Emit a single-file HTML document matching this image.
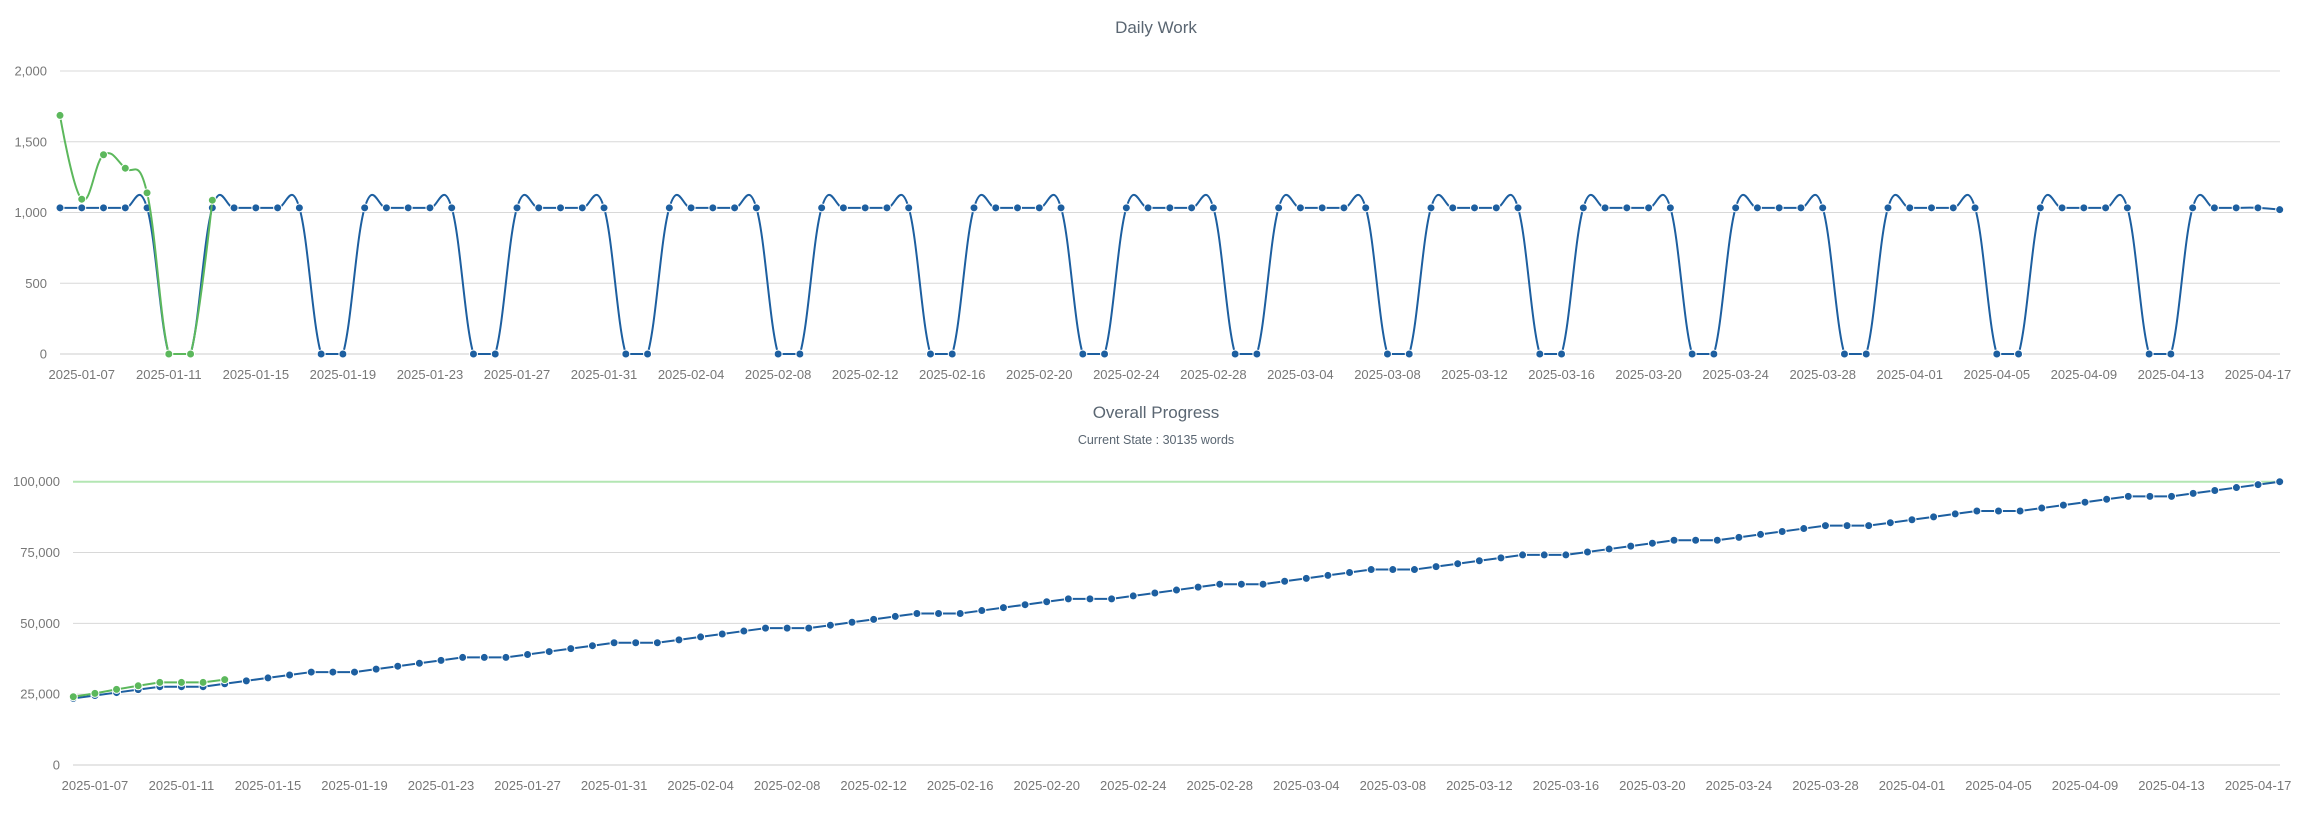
<!DOCTYPE html>
<html><head><meta charset="utf-8"><style>
html,body{margin:0;padding:0;background:#fff;width:2312px;height:820px;overflow:hidden}
svg{display:block}
text{font-family:"Liberation Sans",sans-serif}
</style></head><body>
<svg id="s" width="2312" height="820" xmlns="http://www.w3.org/2000/svg">
<text x="1156" y="33" text-anchor="middle" font-size="17" fill="#5a6672">Daily Work</text>
<text x="1156" y="418" text-anchor="middle" font-size="17" fill="#5a6672">Overall Progress</text>
<text x="1156" y="444" text-anchor="middle" font-size="12.5" fill="#5a6672">Current State : 30135 words</text>
</svg>
<script>
var s=document.getElementById('s'),NS='http://www.w3.org/2000/svg';
function el(t,a,txt){var e=document.createElementNS(NS,t);for(var k in a)e.setAttribute(k,a[k]);if(txt!=null)e.textContent=txt;s.appendChild(e);return e;}
function spline(pts,maxY){
 var d='M'+pts[0][0]+' '+pts[0][1];
 var sm=1.5,den=2.5,ctrl=[];
 for(var i=0;i<pts.length;i++){
  var x=pts[i][0],y=pts[i][1];
  if(i==0||i==pts.length-1){ctrl.push({lx:x,ly:y,rx:x,ry:y});continue;}
  var lx=(sm*x+pts[i-1][0])/den,ly=(sm*y+pts[i-1][1])/den,rx=(sm*x+pts[i+1][0])/den,ry=(sm*y+pts[i+1][1])/den;
  if(rx!==lx){var c=((ry-ly)*(rx-x))/(rx-lx)+y-ry;ly+=c;ry+=c;}
  if(ly>maxY)ly=maxY; if(ry>maxY)ry=maxY;
  ctrl.push({lx:lx,ly:ly,rx:rx,ry:ry});
 }
 for(var i=1;i<pts.length;i++){d+=' C'+ctrl[i-1].rx+' '+ctrl[i-1].ry+' '+ctrl[i].lx+' '+ctrl[i].ly+' '+pts[i][0]+' '+pts[i][1];}
 return d;
}
var N=103,start=new Date(Date.UTC(2025,0,6));
function lab(i){var d=new Date(start.getTime()+i*86400000);return d.toISOString().slice(0,10);}
function isWE(i){var w=new Date(start.getTime()+i*86400000).getUTCDay();return w==0||w==6;}
function chart(o){
 for(var g=0;g<o.ticks.length;g++){var v=o.ticks[g],y=o.Y(v);
  el('line',{x1:o.x0,x2:2280,y1:y,y2:y,stroke:v==0?'#e6e6e6':'#d8d8d8','stroke-width':v==0?2:1});
  el('text',{x:o.lx,y:y+4.5,'text-anchor':'end','font-size':13,fill:'#777'},o.fmt(v));}
 for(var i=1;i<N;i+=4){el('text',{x:o.X(i),y:o.ly,'text-anchor':'middle','font-size':13,fill:'#777'},lab(i));}
 if(o.target!=null){var ty=o.Y(o.target);el('line',{x1:o.x0,x2:2280,y1:ty,y2:ty,stroke:'#b3e6b3','stroke-width':2});}
 var zy=o.Y(0);
 o.series.forEach(function(sr){
  var pts=sr.v.map(function(v,i){return [+o.X(i).toFixed(2),+o.Y(v).toFixed(2)];});
  el('path',{d:sr.smooth?spline(pts,zy):('M'+pts.map(function(p){return p.join(' ')}).join(' L')),fill:'none',stroke:sr.c,'stroke-width':2});
  pts.forEach(function(p){el('circle',{cx:p[0],cy:p[1],r:4,fill:sr.c,stroke:'#fff','stroke-width':1});});
 });
}
function fmt(v){return v.toString().replace(/\B(?=(\d{3})+(?!\d))/g,',');}
var blue='#1d5fa0',green='#5cb85c';
var daily=[];for(var i=0;i<N;i++)daily.push(isWE(i)?0:1033);daily[N-1]=1020;
var gDaily=[1686,1094,1408,1313,1139,0,0,1087];
chart({x0:60,X:function(i){return 60+i*(2279.7-60)/102;},Y:function(v){return 354-v*(354-71)/2000;},
 ticks:[0,500,1000,1500,2000],fmt:fmt,lx:47,ly:379,
 series:[{v:daily,c:blue,smooth:true},{v:gDaily,c:green,smooth:true}]});
var prog=[23500],inc=(100000-23500)/74;for(var i=1;i<N;i++)prog.push(prog[i-1]+(isWE(i)?0:inc));
var gProg=[24100,25280,26690,27960,29150,29150,29150,30135];
chart({x0:73,X:function(i){return 73.3+i*(2279.7-73.3)/102;},Y:function(v){return 765-v*(765-481.7)/100000;},
 ticks:[0,25000,50000,75000,100000],fmt:fmt,lx:60,ly:790,target:100000,
 series:[{v:prog,c:blue,smooth:false},{v:gProg,c:green,smooth:false}]});
</script>
</body></html>
